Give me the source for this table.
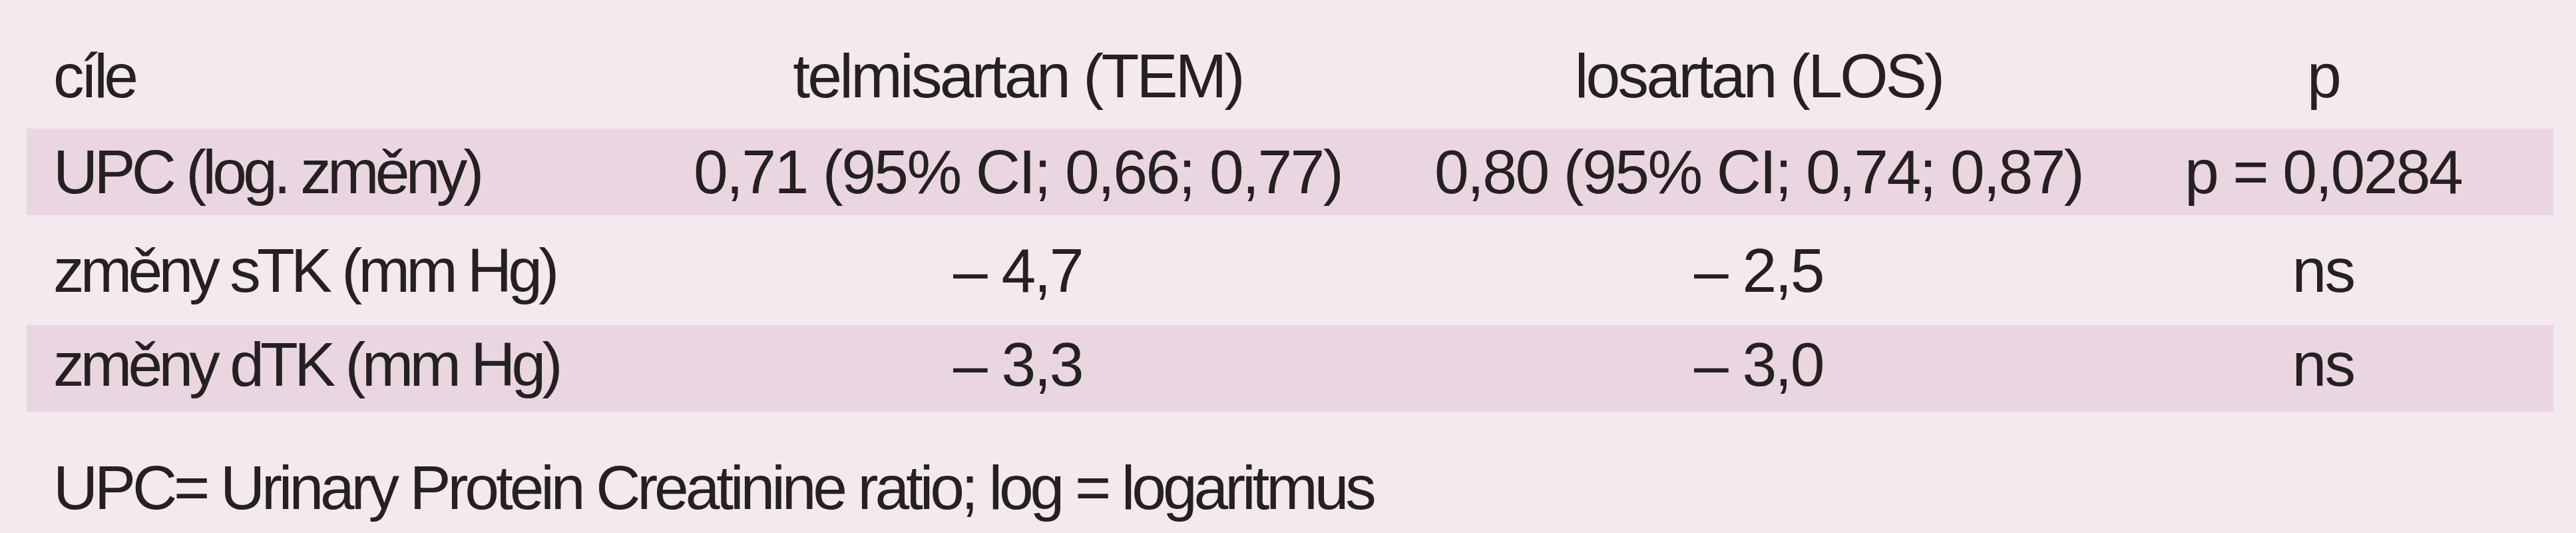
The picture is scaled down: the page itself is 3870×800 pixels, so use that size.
const rows = [
  { label: "UPC (log. změny)", tem: "0,71 (95% CI; 0,66; 0,77)", los: "0,80 (95% CI; 0,74; 0,87)", p: "p = 0,0284", shaded: true, h: "h-[130px]" },
  { label: "změny sTK (mm Hg)", tem: "– 4,7", los: "– 2,5", p: "ns", shaded: false, h: "h-[165px]" },
  { label: "změny dTK (mm Hg)", tem: "– 3,3", los: "– 3,0", p: "ns", shaded: true, h: "h-[130px] pb-[12px]" },
]

const cols = "grid grid-cols-[878px_1222px_1004px_692px]"

export default function App() {
  return (
    <div
      className="w-[3870px] h-[800px] bg-[#f3e9ee] pl-[40px] pr-[34px] text-[93px] leading-[104px] text-[#252022]"
      style={{ fontFamily: '"Liberation Sans", Arial, sans-serif' }}
    >
      {/* header */}
      <div className={`${cols} h-[193px] pt-[62px] whitespace-nowrap tracking-[-0.04em]`}>
        <div className="pl-[40px] tracking-[-0.06em]">cíle</div>
        <div className="text-center">telmisartan (TEM)</div>
        <div className="text-center">losartan (LOS)</div>
        <div className="text-center">p</div>
      </div>

      {rows.map((r) => (
        <div
          key={r.label}
          className={`${cols} ${r.h} items-center whitespace-nowrap ${r.shaded ? "bg-[#e9d6e1]" : ""}`}
        >
          <div className="pl-[40px] tracking-[-0.062em]">{r.label}</div>
          <div className="text-center tracking-[-0.028em]">{r.tem}</div>
          <div className="text-center tracking-[-0.028em]">{r.los}</div>
          <div className="text-center tracking-[-0.028em]">{r.p}</div>
        </div>
      ))}

      <div className="mt-[62px] pl-[40px] whitespace-nowrap tracking-[-0.055em]">
        UPC= Urinary Protein Creatinine ratio; log = logaritmus
      </div>
    </div>
  )
}
